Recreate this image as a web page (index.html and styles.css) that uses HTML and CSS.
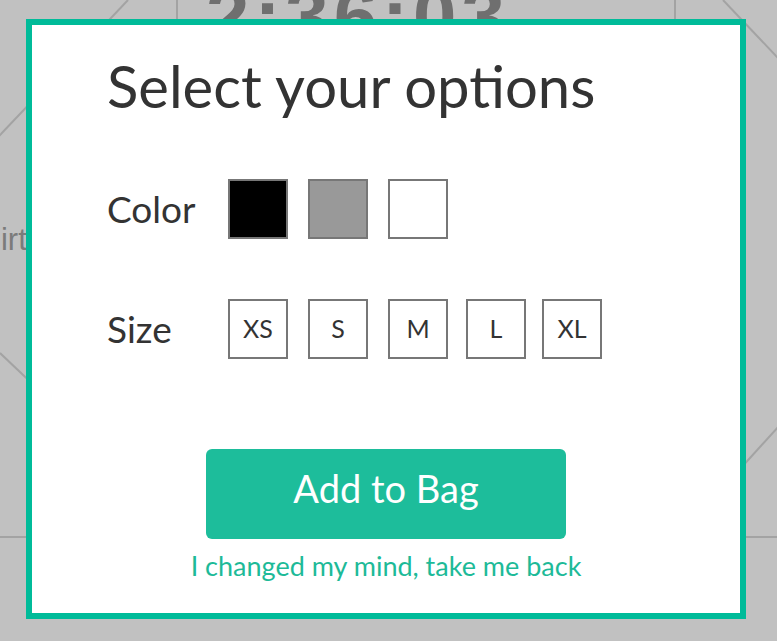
FILE: index.html
```html
<!DOCTYPE html>
<html lang="en">
<head>
<meta charset="utf-8">
<title>Select your options</title>
<link rel="stylesheet" href="styles.css">
</head>
<body>
<div class="page">
  <svg class="backdrop" width="777" height="641" viewBox="0 0 777 641" aria-hidden="true">
    <g stroke="#a3a3a3" stroke-width="2" fill="none">
      <line x1="177" y1="0" x2="177" y2="30"/>
      <line x1="675" y1="0" x2="675" y2="30"/>
      <line x1="128" y1="0" x2="-10" y2="145.5"/>
      <line x1="723" y1="0" x2="790" y2="70.7"/>
      <line x1="0" y1="353" x2="40" y2="391"/>
      <line x1="740" y1="469" x2="790" y2="414"/>
      <line x1="0" y1="537" x2="40" y2="537"/>
      <line x1="740" y1="537" x2="777" y2="537"/>
    </g>
  </svg>
  <div class="clock-strip"><div class="clock">2:36:03</div></div>
  <div class="product-name">Shirt</div>

  <div class="modal">
    <h1 class="title">Select your options</h1>

    <div class="option-row color-row">
      <span class="option-label">Color</span>
      <div class="choices">
        <span class="swatch swatch-black"></span>
        <span class="swatch swatch-gray"></span>
        <span class="swatch swatch-white"></span>
      </div>
    </div>

    <div class="option-row size-row">
      <span class="option-label">Size</span>
      <div class="choices">
        <span class="size">XS</span>
        <span class="size">S</span>
        <span class="size">M</span>
        <span class="size size-l">L</span>
        <span class="size size-xl">XL</span>
      </div>
    </div>

    <div class="actions">
      <button class="add-btn" type="button">Add to Bag</button>
      <a class="back-link" href="#">I changed my mind, take me back</a>
    </div>
  </div>
</div>
</body>
</html>
```

FILE: styles.css
```css
* { box-sizing: border-box; }

html, body {
  margin: 0;
  padding: 0;
}

body {
  background: #c1c1c1;
  font-family: "Lato", "Noto Sans", sans-serif;
}

.page {
  position: relative;
  width: 777px;
  height: 641px;
  overflow: hidden;
  background: #c1c1c1;
}

.backdrop {
  position: absolute;
  left: 0;
  top: 0;
}

.clock-strip {
  position: absolute;
  left: 0;
  top: 0;
  width: 777px;
  height: 19px;
  overflow: hidden;
}

.clock {
  position: absolute;
  left: 206px;
  top: -29px;
  font-family: "Liberation Sans", Arial, sans-serif;
  font-weight: bold;
  font-size: 78px;
  line-height: 90px;
  letter-spacing: 5px;
  color: #6f6f6f;
  white-space: nowrap;
}

.product-name {
  position: absolute;
  left: -37px;
  top: 220px;
  font-family: "Liberation Sans", Arial, sans-serif;
  font-size: 31px;
  line-height: 40px;
  color: #7b7b7b;
  white-space: nowrap;
}

.modal {
  position: absolute;
  left: 26px;
  top: 19px;
  width: 720px;
  height: 600px;
  border: 6px solid #00bb99;
  background: #fff;
  padding: 26px 0 0 75px;
  color: #333;
}

.title {
  margin: 0;
  font-size: 58px;
  line-height: 70px;
  font-weight: 400;
  color: #333;
}

.option-row {
  display: flex;
  align-items: center;
  height: 60px;
}

.color-row { margin-top: 58px; }
.size-row { margin-top: 60px; }

.option-label {
  width: 121px;
  font-size: 37px;
  line-height: 40px;
  color: #333;
}

.choices {
  display: flex;
  gap: 20px;
}

.swatch {
  width: 60px;
  height: 60px;
  border: 2px solid #777;
}

.swatch-black { background: #000; }
.swatch-gray { background: #999; }
.swatch-white { background: #fff; }

.size {
  width: 60px;
  height: 60px;
  border: 2px solid #777;
  display: flex;
  align-items: center;
  justify-content: center;
  font-size: 25px;
  color: #333;
  padding-bottom: 3px;
}

.size-l { margin-left: -2px; }
.size-xl { margin-left: -4px; }

.actions {
  display: flex;
  flex-direction: column;
  align-items: center;
  margin-top: 90px;
  margin-left: -75px;
}

.add-btn {
  width: 360px;
  height: 90px;
  border: 0;
  border-radius: 6px;
  background: #1dbd9b;
  color: #fff;
  font-family: "Lato", "Noto Sans", sans-serif;
  font-size: 38px;
  padding: 0 0 12px;
}

.back-link {
  margin-top: 10px;
  font-size: 27px;
  line-height: 34px;
  color: #1dba98;
  text-decoration: none;
}
```
